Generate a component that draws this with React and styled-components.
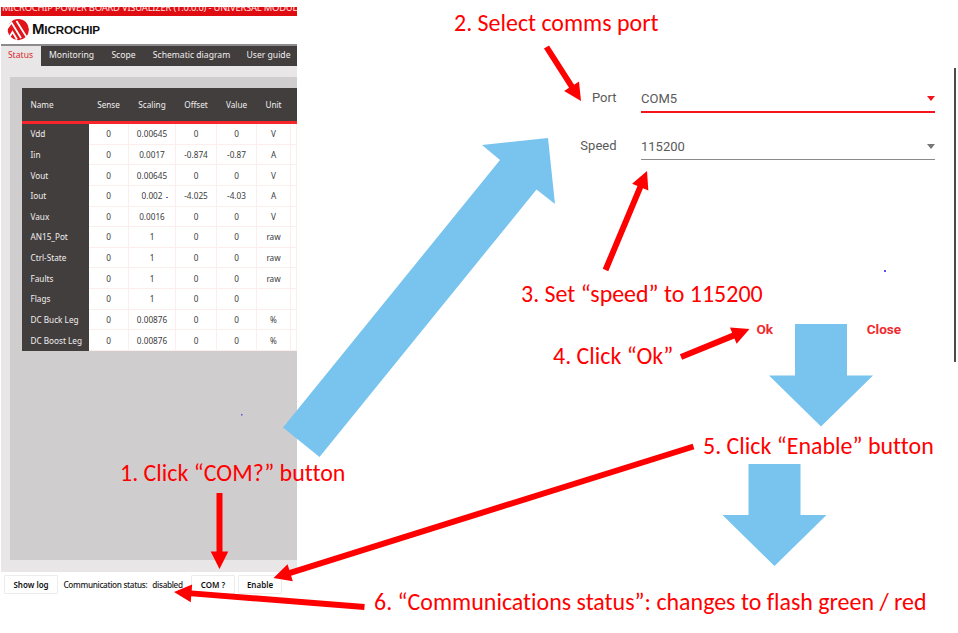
import React from "react";
import styled, { createGlobalStyle } from "styled-components";

const Global = createGlobalStyle`
  * { box-sizing: border-box; }
  body { margin: 0; background: #fff; }
`;

const Page = styled.main`
  position: relative;
  width: 958px;
  height: 633px;
  overflow: hidden;
  display: grid;
  grid-template-columns: 296px 1fr;
  padding-left: 1px;
  background: #fff;
`;

const AppWindow = styled.section`
  display: flex;
  flex-direction: column;
  padding-top: 7px;
  min-width: 0;
  overflow: hidden;
  font-family: "Noto Sans", "Open Sans", sans-serif;
  font-size: 8.2px;
  color: #3b3b3b;
`;

const TitleBar = styled.header`
  height: 9px;
  flex: none;
  overflow: hidden;
  background: #df0d12;
  color: #ffe4e4;
  font-size: 9.4px;
  line-height: 10px;
  letter-spacing: -0.2px;
  white-space: nowrap;
`;

const TitleText = styled.div`
  margin: -4px 0 0 1px;
`;

const Brand = styled.div`
  height: 28px;
  flex: none;
  display: flex;
  align-items: center;
  gap: 2px;
  padding: 0 0 0 6px;
`;

const BrandName = styled.div`
  font: 700 11.6px/16px "Liberation Sans", sans-serif;
  color: #111;
  letter-spacing: -0.15px;
  margin-top: -2px;
`;

const BrandInitial = styled.span`
  font-size: 15px;
`;

const Tabs = styled.nav`
  height: 22px;
  flex: none;
  display: flex;
  border-top: 2px solid #8d8b8b;
  background: #433e3e;
`;

const Tab = styled.div`
  width: ${(p) => p.$width}px;
  flex: none;
  display: flex;
  align-items: center;
  justify-content: center;
  padding: 0 1px 2px 0;
  white-space: nowrap;
  font-size: 8.6px;
  background: ${(p) => (p.$active ? "#e8e6e7" : "transparent")};
  color: ${(p) => (p.$active ? "#d8262c" : "#f0eeee")};
`;

const Body = styled.div`
  height: 506px;
  flex: none;
  padding: 11px 0 12px 9px;
  background: #e8e6e7;
`;

const Panel = styled.div`
  height: 483px;
  padding: 11px 0 0 12px;
  background: #cfcdce;
`;

const Table = styled.div`
  display: grid;
  grid-template-columns: 67px 40px 47px 41px 40px 34px 1fr;
  grid-template-rows: 36px;
  grid-auto-rows: 20.64px;
  background: #fff;
`;

const HeadCell = styled.div`
  display: flex;
  align-items: center;
  justify-content: ${(p) => (p.$first ? "flex-start" : "center")};
  padding: ${(p) => (p.$first ? "0 0 0 8.5px" : "0 1px 0 0")};
  background: #433e3e;
  color: #f0eeee;
  border-bottom: 3px solid #f8262a;
`;

const NameCell = styled.div`
  display: flex;
  align-items: center;
  padding: 0 0 1px 8.5px;
  background: #433e3e;
  color: #f0eeee;
  white-space: nowrap;
`;

const Cell = styled.div`
  display: flex;
  align-items: center;
  justify-content: center;
  border-right: 1px solid #fdeeee;
  border-bottom: 1px solid #fdeeee;
  font-size: 8.2px;
`;

const Footer = styled.footer`
  display: flex;
  align-items: center;
  height: 25px;
  padding-left: 3px;
  color: #222;
`;

const FooterButton = styled.button`
  width: ${(p) => p.$width}px;
  height: 19px;
  margin-right: ${(p) => p.$gap || 0}px;
  padding: 0;
  border: 1px solid #ececec;
  border-radius: 1px;
  background: #fff;
  color: #111;
  font: 600 8px "Noto Sans", sans-serif;
  white-space: nowrap;
`;

const Status = styled.div`
  display: flex;
  gap: 5px;
  width: 133px;
  padding-left: 5.5px;
  font-size: 8.2px;
  font-weight: 500;
  letter-spacing: -0.33px;
  white-space: nowrap;
`;

const Dialog = styled.section`
  align-self: start;
  display: flex;
  flex-direction: column;
  height: 294px;
  margin-top: 68px;
  margin-right: 2px;
  padding: 16px 19px 0 264.5px;
  border-right: 2px solid #4a4a4a;
  font-family: Roboto, sans-serif;
  color: #5a5a5a;
`;

const Field = styled.div`
  display: grid;
  grid-template-columns: 55px 1fr;
  column-gap: 24.5px;
  height: 48px;
`;

const FieldLabel = styled.label`
  font-size: 13px;
  line-height: 28px;
  text-align: right;
`;

const Select = styled.div`
  display: flex;
  justify-content: space-between;
  align-items: center;
  height: ${(p) => (p.$active ? 29 : 28)}px;
  padding-top: 1px;
  border-bottom: ${(p) => (p.$active ? "2px solid #f3141c" : "1px solid #8a8a8a")};
  font-size: 13px;
`;

const Caret = styled.span`
  border: 4.5px solid transparent;
  border-top-width: 5px;
  border-top-color: ${(p) => (p.$active ? "#f3141c" : "#777")};
  border-bottom: 0;
`;

const Actions = styled.div`
  display: flex;
  gap: 93.5px;
  margin: 140px 0 0 195px;
  font-size: 13.6px;
  line-height: 18px;
  font-weight: 700;
  color: #ee2b2f;
`;

const Overlay = styled.svg`
  position: absolute;
  inset: 0;
  pointer-events: none;
`;

const Note = styled.p`
  position: absolute;
  left: ${(p) => p.$x}px;
  top: ${(p) => p.$y}px;
  margin: 0;
  color: #f00;
  font: 400 23.95px/28px Carlito, Lato, sans-serif;
  font-variant-ligatures: none;
  white-space: nowrap;
`;

const TABS = [
  ["Status", 40],
  ["Monitoring", 62],
  ["Scope", 42],
  ["Schematic diagram", 94],
  ["User guide", 60],
];

const HEAD = ["Name", "Sense", "Scaling", "Offset", "Value", "Unit", ""];

const ROWS = [
  ["Vdd", "0", "0.00645", "0", "0", "V"],
  ["Iin", "0", "0.0017", "-0.874", "-0.87", "A"],
  ["Vout", "0", "0.00645", "0", "0", "V"],
  ["Iout", "0", "0.002", "-4.025", "-4.03", "A"],
  ["Vaux", "0", "0.0016", "0", "0", "V"],
  ["AN15_Pot", "0", "1", "0", "0", "raw"],
  ["Ctrl-State", "0", "1", "0", "0", "raw"],
  ["Faults", "0", "1", "0", "0", "raw"],
  ["Flags", "0", "1", "0", "0", ""],
  ["DC Buck Leg", "0", "0.00876", "0", "0", "%"],
  ["DC Boost Leg", "0", "0.00876", "0", "0", "%"],
];

const NOTES = [
  { text: "1. Click “COM?” button", x: 120, y: 459 },
  { text: "2. Select comms port", x: 454, y: 9 },
  { text: "3. Set “speed” to 115200", x: 521, y: 280 },
  { text: "4. Click “Ok”", x: 553, y: 342 },
  { text: "5. Click “Enable” button", x: 703, y: 432 },
  { text: "6. “Communications status”: changes to flash green / red", x: 374, y: 588 },
];

// Each pointer runs from its tail (x1, y1) to its tip (x2, y2).
const POINTERS = [
  [546.5, 47, 581, 101],
  [605.5, 270, 647, 171],
  [681, 357, 749.5, 329],
  [219.5, 493, 219.5, 569],
  [693.5, 446.5, 273.5, 578],
  [364.5, 607, 174, 592],
];

function Pointer({ from: [x1, y1, x2, y2] }) {
  const length = Math.hypot(x2 - x1, y2 - y1);
  const angle = (Math.atan2(y2 - y1, x2 - x1) * 180) / Math.PI;
  const neck = length - 17.5;
  return (
    <polygon
      fill="#f00"
      transform={`translate(${x1} ${y1}) rotate(${angle})`}
      points={`0,-3 ${neck},-3 ${neck},-8.8 ${length},0 ${neck},8.8 ${neck},3 0,3`}
    />
  );
}

function Logo() {
  return (
    <svg width="23" height="22" viewBox="0 0 23 22">
      <circle cx="11.3" cy="10.6" r="10.6" fill="#e1141b" />
      <path
        d="M-1 11 L4.5 3.5 L14 19 M9.5 2 L19.5 18 M2.5 18 L5.5 13 L10 20.5"
        stroke="#fff"
        strokeWidth="1.8"
        fill="none"
      />
    </svg>
  );
}

export default function App() {
  return (
    <Page>
      <Global />
      <AppWindow>
        <TitleBar>
          <TitleText>MICROCHIP POWER BOARD VISUALIZER (1.0.0.0) - UNIVERSAL MODULE</TitleText>
        </TitleBar>
        <Brand>
          <Logo />
          <BrandName>
            <BrandInitial>M</BrandInitial>ICROCHIP
          </BrandName>
        </Brand>
        <Tabs>
          {TABS.map(([label, width], i) => (
            <Tab key={label} $width={width} $active={i === 0}>{label}</Tab>
          ))}
        </Tabs>
        <Body>
          <Panel>
            <Table>
              {HEAD.map((h, i) => (
                <HeadCell key={i} $first={i === 0}>{h}</HeadCell>
              ))}
              {ROWS.map(([name, ...values]) => (
                <React.Fragment key={name}>
                  <NameCell>{name}</NameCell>
                  {values.map((v, i) => <Cell key={i}>{v}</Cell>)}
                  <Cell />
                </React.Fragment>
              ))}
            </Table>
          </Panel>
        </Body>
        <Footer>
          <FooterButton $width={54}>Show log</FooterButton>
          <Status>
            <span>Communication status:</span>
            <span>disabled</span>
          </Status>
          <FooterButton $width={44} $gap={3}>COM ?</FooterButton>
          <FooterButton $width={44}>Enable</FooterButton>
        </Footer>
      </AppWindow>
      <Dialog>
        <Field>
          <FieldLabel>Port</FieldLabel>
          <Select $active>COM5<Caret $active /></Select>
        </Field>
        <Field>
          <FieldLabel>Speed</FieldLabel>
          <Select>115200<Caret /></Select>
        </Field>
        <Actions>
          <span>Ok</span>
          <span>Close</span>
        </Actions>
      </Dialog>
      <Overlay width="958" height="633" viewBox="0 0 958 633">
        <g fill="#78c4ee">
          <polygon points="283,427.5 500,160 482,145 548,138 555,204 536.5,189.5 319.5,457" />
          <polygon points="795,324 847,324 847,375.5 873,375.5 821,426.5 769,375.5 795,375.5" />
          <polygon points="748.5,464 800.5,464 800.5,515 826.5,515 774.5,566 722.5,515 748.5,515" />
        </g>
        {POINTERS.map((p, i) => <Pointer key={i} from={p} />)}
        <g fill="#5757e6">
          <rect x="884" y="270" width="2" height="2" />
          <rect x="241" y="414" width="1.5" height="1.5" />
          <rect x="166" y="197" width="2" height="1" />
        </g>
      </Overlay>
      {NOTES.map((n) => (
        <Note key={n.text} $x={n.x} $y={n.y}>{n.text}</Note>
      ))}
    </Page>
  );
}
